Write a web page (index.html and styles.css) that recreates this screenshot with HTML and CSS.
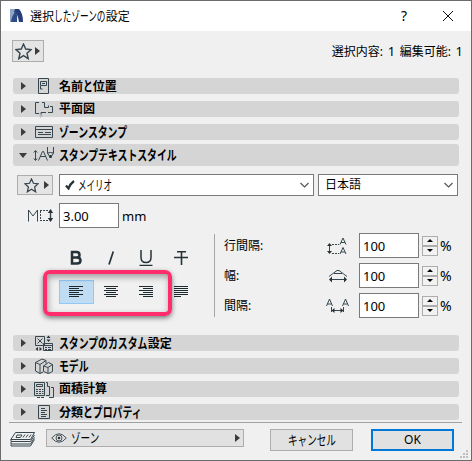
FILE: index.html
```html
<!DOCTYPE html>
<html lang="ja">
<head>
<meta charset="utf-8">
<title>選択したゾーンの設定</title>
<link rel="stylesheet" href="styles.css">
</head>
<body>
<div class="window">
  <header class="titlebar">
    <svg class="logo" width="15" height="15" viewBox="0 0 15 15"><path d="M0 0h8l-6 13H0z" fill="#8fa5c4"/><path d="M5 0h4q4 4 4 13H9Q8 5 4 3z" fill="#273e78"/><path d="M1 13Q2 6 6 2q2 5 1 11z" fill="#304c87"/></svg>
    <h1 class="title">選択<span class="kana k6">したゾーンの</span>設定</h1>
    <span class="help">?</span>
    <svg class="close" width="10" height="10" viewBox="0 0 10 10"><path d="M0 0l10 10M10 0L0 10" stroke="#111" fill="none"/></svg>
  </header>

  <div class="top">
    <button class="fav fav-top"><svg width="17" height="17" viewBox="0 0 17 17"><path class="ln thick" d="M8.5 1l2.2 5 5.3.6-4 3.6 1.2 5.5-4.7-3-4.7 3L5 10.200 1 6.600 6.300 6z"/></svg><i class="arrow"></i></button>
    <span class="status">選択内容: <span class="count">1</span> 編集可能: <span class="count">1</span></span>
  </div>

  <section class="bars">
    <div class="bar"><i class="arrow"></i><svg class="ico" width="20" height="18" viewBox="0 0 20 18"><path class="ln" d="M4.500 1.500h10v15h-10zM6.500 4.500h6v4h-6zM8 6.500h3M6.500 9v3h2"/></svg><b>名前<span class="kana k1">と</span>位置</b></div>
    <div class="bar"><i class="arrow"></i><svg class="ico" width="20" height="18" viewBox="0 0 20 18"><path class="ln" d="M5 2.500H1.500v11H5M7 16v-3.500h5M8 2.500h2.500v5h4v-2M14 12.500h4.500v-6H16"/><path d="M5 13l4 3-3 2z" fill="#bbb"/></svg><b>平面図</b></div>
    <div class="bar"><i class="arrow"></i><svg class="ico" width="20" height="18" viewBox="0 0 20 18"><path class="ln" d="M1.500 3.500h17v11h-17zM1.500 6.500h17M4 9.500h5M11 9.500h6M4 11.500h13"/></svg><b><span class="kana k7">ゾーンスタンプ</span></b></div>
    <div class="bar open"><i class="arrow down"></i><svg class="ico" width="22" height="18" viewBox="0 0 22 18"><path class="ln" d="M2.500 5v9M.8 6.500l1.700-2 1.700 2M.8 12.500l1.700 2 1.700-2M5.500 14.500l4-9h1l4 9M7 10.500h6M14.500 1v6l3 5 3-5V1M14.500 7q3-1 6 0"/><path d="M16.500 9h2v3h-2z" fill="#273238"/></svg><b><span class="kana k12">スタンプテキストスタイル</span></b></div>
  </section>

  <section class="panel">
    <div class="row fonts">
      <button class="fav"><svg width="15" height="15" viewBox="0 0 17 17"><path class="ln thick" d="M8.500 1l2.200 5 5.300.6-4 3.600 1.200 5.500-4.700-3-4.700 3L5 10.200 1 6.600 6.300 6z"/></svg><i class="arrow"></i></button>
      <div class="combo combo-font"><svg class="check" width="10" height="10" viewBox="0 0 10 10"><path d="M1 5.500l2.500 3Q5 4 9 1" fill="none" stroke="#263238" stroke-width="2.200"/></svg><span class="kana k4">メイリオ</span><svg class="chev" width="9" height="6" viewBox="0 0 9 6"><path d="M.5 1l4 4 4-4"/></svg></div>
      <div class="combo combo-lang"><span>日本語</span><svg class="chev" width="9" height="6" viewBox="0 0 9 6"><path d="M.5 1l4 4 4-4"/></svg></div>
    </div>
    <div class="row size">
      <svg width="25" height="13" viewBox="0 0 25 13"><path class="ln" d="M.5 12.500V1l4.500 6 4.500-6v11.500"/><path class="ln" stroke-dasharray="2 1" d="M12 1.500h8M12 11.500h8M12.500 2v9"/><path class="ln thick" d="M22.500 1v11"/><path d="M19.800 4l2.700-4 2.700 4zM19.800 9l2.700 4 2.700-4z" fill="#263238"/></svg>
      <span class="field num">3.00</span><span class="unit">mm</span>
    </div>
    <div class="format">
      <div class="styles">
        <div class="tools">
          <span class="tool"><svg width="14" height="16" viewBox="0 0 14 16"><path d="M3 2h4.500q3 0 3 3 0 2.500-3 2.500H3zM3 7.500h5q3.500 0 3.500 3T8 13.500H3z" fill="none" stroke="#263238" stroke-width="2.500"/></svg></span>
          <span class="tool"><svg width="14" height="16" viewBox="0 0 14 16"><path d="M9.300 1.500L5 14.500" stroke="#263238" stroke-width="1.700"/></svg></span>
          <span class="tool"><svg width="14" height="16" viewBox="0 0 14 16"><path d="M2 0v7.500Q2 12.500 7 12.500T12 7.500V0M.5 15.500h13" fill="none" stroke="#263238" stroke-width="1.500"/></svg></span>
          <span class="tool"><svg width="14" height="16" viewBox="0 0 14 16"><path d="M3 1.700h9M7.500 1v14M0 7.500h14" fill="none" stroke="#263238" stroke-width="1.600"/></svg></span>
        </div>
        <div class="tools aligns">
          <span class="tool selected"><svg width="14" height="12" viewBox="0 0 14 12"><path class="ln" d="M0 .5h14M0 2.500h10M0 4.500h14M0 6.500h10M0 8.500h14M0 10.500h10"/></svg></span>
          <span class="tool"><svg width="14" height="12" viewBox="0 0 14 12"><path class="ln" d="M0 .5h14M2 2.500h10M0 4.500h14M2 6.500h10M0 8.500h14M2 10.500h10"/></svg></span>
          <span class="tool"><svg width="14" height="12" viewBox="0 0 14 12"><path class="ln" d="M0 .5h14M4 2.500h10M0 4.500h14M4 6.500h10M0 8.500h14M4 10.500h10"/></svg></span>
          <span class="tool"><svg width="14" height="12" viewBox="0 0 14 12"><path class="ln" d="M0 .5h14M0 2.500h14M0 4.500h14M0 6.500h14M0 8.500h14M0 10.500h7"/></svg></span>
          <span class="highlight"></span>
        </div>
      </div>
      <div class="spacing">
        <div class="metric"><span class="label">行間隔:</span><svg width="24" height="20" viewBox="0 0 24 20"><path class="ln" d="M3.500 8v9M14 8.500L17 2l3 6.500M15 6.500h4M14 18l3-6.500 3 6.500M15 16h4"/><path class="ln" stroke-dasharray="2 1" d="M6 8.500h7M6 17.500h7"/><path d="M1 10l2.500-3L6 10zM1 15l2.500 3L6 15z" fill="#263238"/></svg><span class="field">100</span><span class="spin"><i class="up"></i><i class="dn"></i></span><span class="pct">%</span></div>
        <div class="metric"><span class="label">幅:</span><svg width="24" height="20" viewBox="0 0 24 20"><path class="ln" d="M3 10.500l8-6h2l8 6M8 7.500h8M5 13.500h14"/><path d="M3 13.500l3-3v6zM21 13.500l-3-3v6z" fill="#263238"/></svg><span class="field">100</span><span class="spin"><i class="up"></i><i class="dn"></i></span><span class="pct">%</span></div>
        <div class="metric"><span class="label">間隔:</span><svg width="24" height="20" viewBox="0 0 24 20"><path class="ln" d="M.5 10l3-7 3 7M1.500 8h4M16.500 10l3-7 3 7M17.500 8h4M5.500 11v5M17.500 11v5M7 14.500h9"/><path d="M5.500 14.500l3-2.500v5zM17.500 14.500l-3-2.500v5z" fill="#263238"/></svg><span class="field">100</span><span class="spin"><i class="up"></i><i class="dn"></i></span><span class="pct">%</span></div>
      </div>
    </div>
  </section>

  <section class="bars lower">
    <div class="bar"><i class="arrow"></i><svg class="ico" width="20" height="18" viewBox="0 0 20 18"><path class="ln" d="M1.500 2.500h9v9h-9zM3.500 4.500l5 5M8.500 4.500l-5 5M9.500 9.500h9v7h-9zM9.500 11.500h9M11 13.500h2M14 13.500h3M11 15.500h2M14 15.500h3"/><path d="M12.500 4l2-2.500 2 2.500zM12.500 5.500l2 2.500 2-2.500zM4 13l-2.500 2L4 17zM5.500 13L8 15l-2.500 2z" fill="#263238"/></svg><b><span class="kana k9">スタンプのカスタム</span>設定</b></div>
    <div class="bar"><i class="arrow"></i><svg class="ico" width="20" height="18" viewBox="0 0 20 18"><path class="ln" d="M1.500 5.500L8 2l4 1.500v3M1.500 5.500L6 7.500l6-4M1.500 5.500V14L6 16.500v-9M6 16.500l3-1.500M9.500 9l5-3.500 4 2v7l-4 2-5-2zM9.500 9l4.500 1.500 4.500-3M14 10.500v6"/></svg><b><span class="kana k3">モデル</span></b></div>
    <div class="bar"><i class="arrow"></i><svg class="ico" width="22" height="18" viewBox="0 0 22 18"><path class="ln" d="M1.500 2.500h10v13h-10zM3.500 4.500h6v2h-6zM3 9.500h2M6 9.500h2M9 9.500h1.500M3 11.500h2M6 11.500h2M9 11.500h1.500M3 13.500h2M6 13.500h2M9 13.500h1.500M13 2.500h1.500v4h2v9H13M18 7.500h2.500v10H16M4 17.500h3M8 17.500h3"/></svg><b>面積計算</b></div>
    <div class="bar"><i class="arrow"></i><svg class="ico" width="20" height="18" viewBox="0 0 20 18"><path class="ln" d="M4.500 2.500h11v13h-11zM7 5.500h4M7 7.500h6M7 9.500h4M7 11.500h6M7 13.500h5"/></svg><b>分類<span class="kana k6">とプロパティ</span></b></div>
  </section>

  <footer class="footer">
    <svg class="layers" width="26" height="16" viewBox="0 0 26 16"><path class="ln" d="M5.500 1.500h19l-4 7H.8zM1 8.500v2h19.500l4-6.500M1 11v2h19.500l4-6.500M1 13.500v1.500h19.500l4-6.500M7 4h5l-1.500 2.500H6zM15 3.500l-2 3M18 3.500l-2 3M21 3.500l-2 3"/></svg>
    <div class="layer"><svg width="16" height="10" viewBox="0 0 16 10"><path d="M.7 5Q8-3.500 15.300 5 8 13.500.7 5z" fill="none" stroke="#46545a"/><circle cx="8" cy="5" r="3" fill="none" stroke="#46545a"/><circle cx="8" cy="5" r="1.300" fill="#263238"/></svg><span class="kana k3">ゾーン</span><i class="arrow"></i></div>
    <button class="btn cancel"><span class="kana k5">キャンセル</span></button>
    <button class="btn ok">OK</button>
    <svg class="grip" width="8" height="8" viewBox="0 0 8 8"><path d="M6 0h2v2H6zM3 3h2v2H3zM6 3h2v2H6zM0 6h2v2H0zM3 6h2v2H3zM6 6h2v2H6z" fill="#bfbfbf"/></svg>
  </footer>
</div>
</body>
</html>
```

FILE: styles.css
```css
* { box-sizing: border-box; }
html, body { margin: 0; }
body { font: 12px/16px "Noto Sans", "Noto Sans CJK JP", sans-serif; color: #000; }
button { font: inherit; color: inherit; padding: 0; margin: 0; }
svg { display: block; flex: none; }

.window { width: 472px; height: 461px; background: #f0f0f0; border: 1px solid #6b6b6b; overflow: hidden; }
.ln { fill: none; stroke: #37474f; stroke-width: 1; }
.thick { stroke-width: 1.4; }

/* Kana are set condensed; the width follows the character count. */
.kana { --s: .71; display: inline-block; width: calc(var(--n) * 13.5px * var(--s)); font-size: 13.5px; line-height: 16px; white-space: nowrap; transform: scaleX(var(--s)); transform-origin: left; text-align: left; }
.k1 { --n: 1; } .k3 { --n: 3; } .k4 { --n: 4; } .k5 { --n: 5; } .k6 { --n: 6; }
.k7 { --n: 7; } .k9 { --n: 9; } .k12 { --n: 12; }

.arrow { flex: none; width: 0; height: 0; border-left: 5px solid #3c3c3c; border-top: 4px solid transparent; border-bottom: 4px solid transparent; }
.arrow.down { border-top: 5px solid #3c3c3c; border-left: 4px solid transparent; border-right: 4px solid transparent; border-bottom: 0; }

.titlebar { height: 30px; background: #fff; display: flex; align-items: center; padding: 0 18px 0 9px; }
.title { font: inherit; margin: 0 auto 0 5px; }
.title .kana { --s: .64; }
.help { font-size: 14px; margin-right: 36px; }

.top { height: 47px; display: flex; justify-content: space-between; align-items: flex-start; padding: 9px 8px 0 11px; }
.status { margin-top: 3px; word-spacing: 1.5px; }
.count { font-size: 13px; }
.fav { width: 36px; height: 20px; display: flex; align-items: center; justify-content: flex-end; gap: 5px; padding-right: 3px; background: #e4e4e4; border: 1px solid #adadad; }
.fav-top { width: 32px; height: 22px; gap: 3px; padding-right: 3px; }

.bars { display: flex; flex-direction: column; gap: 7px; padding: 0 12px; }
.bar { height: 16px; display: flex; align-items: center; background: #d5d5d5; border-radius: 3px; padding-left: 8px; }
.bar .ico { margin-left: 7px; width: 22px; }
.bar b { margin-left: 4px; }
.bar .kana { --s: .73; }
.bar.open { height: 22px; margin-top: -3px; }
.bar.open .arrow { margin-left: -2px; }
.bar.open .ico { margin-left: 6px; }

.panel { height: 169px; padding: 8px 13px 0 16px; }
.row { display: flex; align-items: center; }
.combo { height: 22px; display: flex; align-items: center; background: #fff; border: 1px solid #7a7a7a; }
.combo-font { width: 255px; margin-left: 6px; padding: 0 4px 0 5px; }
.combo-font .kana { --s: .63; margin-left: 3px; }
.combo-lang { width: 140px; margin-left: 4px; padding: 0 4px 0 6px; }
.chev { margin-left: auto; fill: none; stroke: #555; stroke-width: 1.2; }
.fonts .fav { flex: none; }
.size { margin-top: 7px; padding-left: 11px; }
.field { width: 60px; height: 25px; background: #fff; border: 1px solid #7a7a7a; font-size: 13px; line-height: 24px; padding-left: 3px; }
.num { margin-left: 6px; }
.unit { margin-left: 3px; font-size: 13px; }

.format { display: flex; margin-top: 5px; }
.styles { width: 198px; height: 83px; margin-top: 1px; padding: 12px 0 0 42px; border-right: 1px solid #a6a6a6; }
.tools { position: relative; display: flex; height: 24px; }
.tool { width: 35px; height: 24px; display: flex; align-items: center; padding-left: 10px; }
.aligns { margin-top: 10px; }
.aligns .ln { stroke: #1c292f; }
.selected { background: #c0dcf3; border: 1px solid #90c8f6; padding-left: 9px; }
.highlight { position: absolute; left: -16px; top: -10px; width: 129px; height: 46px; border: 4px solid #ff2d6b; border-radius: 7px; box-shadow: 0 2px 5px rgba(0,0,0,.5), inset 1px 3px 6px rgba(0,0,0,.35); }

.spacing { display: flex; flex-direction: column; gap: 5px; padding-left: 9px; }
.metric { display: flex; align-items: center; height: 25px; }
.label { width: 102px; }
.metric .field { margin-left: 9px; }
.spin { display: grid; grid-template-rows: 10px 10px; width: 16px; margin-left: 3px; }
.spin i { border: 1px solid #adadad; background: #f2f2f2; display: flex; align-items: center; justify-content: center; }
.spin i::after { content: ""; border: 3px solid transparent; border-top-width: 0; border-bottom-color: #000; }
.spin .dn::after { border-top: 3px solid #000; border-bottom: 0; }
.pct { margin-left: 2px; font-size: 14px; }

.footer { display: flex; align-items: flex-start; margin: 2px 0 0 8px; width: 453px; border-top: 1px solid #a0a0a0; padding-top: 6px; }
.layers { margin: 2px 0 0 1px; }
.layer { width: 198px; height: 18px; margin-left: 10px; display: flex; align-items: center; background: #e1e1e1; border: 1px solid #adadad; padding: 0 3px 0 4px; }
.layer .kana { margin-left: 4px; }
.layer .arrow { margin-left: auto; }
.btn { flex: none; width: 83px; height: 22px; background: #e1e1e1; border: 1px solid #adadad; }
.cancel { margin-left: 26px; }
.ok { margin-left: 18px; border: 2px solid #0078d7; }
.grip { margin: 21px -8px 0 6px; }
```
